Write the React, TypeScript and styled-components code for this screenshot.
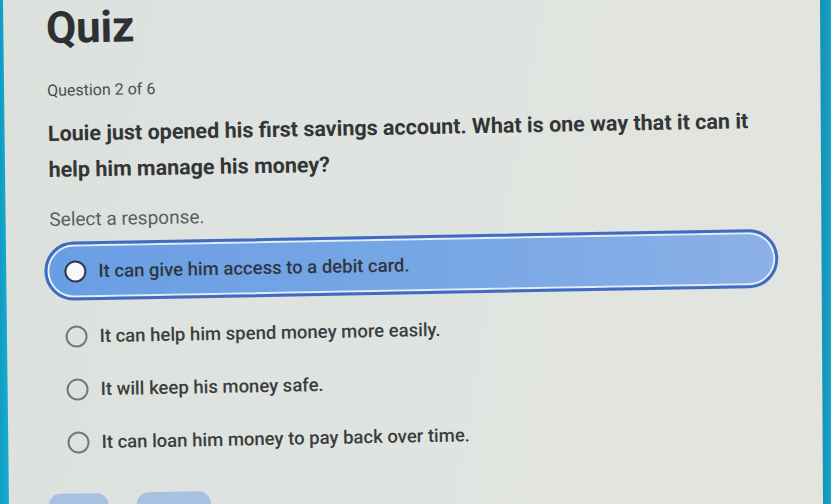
import * as React from 'react';
import styled, { createGlobalStyle } from 'styled-components';

const GlobalStyle = createGlobalStyle`
  html, body {
    margin: 0;
    padding: 0;
    height: 100%;
    overflow: hidden;
    background: #dfe3df;
  }
  #root {
    height: 100%;
  }
`;

interface Choice {
  id: string;
  label: string;
}

const choices: Choice[] = [
  { id: 'a', label: 'It can give him access to a debit card.' },
  { id: 'b', label: 'It can help him spend money more easily.' },
  { id: 'c', label: 'It will keep his money safe.' },
  { id: 'd', label: 'It can loan him money to pay back over time.' },
];

export default function App() {
  const [picked, setPicked] = React.useState('a');

  return (
    <>
      <GlobalStyle />
      <Screen>
        <LeftBezel />
        <Content>
          <Sheet>
            <Title>Quiz</Title>
            <Progress>Question 2 of 6</Progress>
            <Prompt>
              Louie just opened his first savings account. What is one way that it can it help him manage his money?
            </Prompt>
            <Hint>Select a response.</Hint>
            <ChoiceList>
              {choices.map((c) => (
                <ChoiceRow
                  key={c.id}
                  $selected={picked === c.id}
                  onClick={() => setPicked(c.id)}
                >
                  <Radio $selected={picked === c.id} />
                  <ChoiceLabel $selected={picked === c.id}>{c.label}</ChoiceLabel>
                </ChoiceRow>
              ))}
            </ChoiceList>
            <Actions>
              <ActionButton $width={60} />
              <ActionButton $width={74} />
            </Actions>
          </Sheet>
        </Content>
        <RightBezel />
      </Screen>
    </>
  );
}

const Screen = styled.div`
  display: flex;
  height: 100vh;
  overflow: hidden;
  background: linear-gradient(100deg, #dce1dd 0%, #e0e4e0 50%, #e2e4de 100%);
  font-family: Roboto, "Liberation Sans", sans-serif;
`;

const LeftBezel = styled.div`
  flex: 0 0 10px;
  background: linear-gradient(90deg, #0f9cc4, #1cb0d2);
  clip-path: polygon(0 0, 3px 0, 9px 100%, 0 100%);
`;

const RightBezel = styled.div`
  flex: 0 0 11px;
  background: linear-gradient(90deg, #1590b6, #1aa3c8);
  clip-path: polygon(0 0, 100% 0, 100% 100%, 3px 100%);
`;

const Content = styled.main`
  flex: 1;
  min-width: 0;
  overflow: hidden;
`;

/* the whole sheet sits a touch tilted on the screen */
const Sheet = styled.div`
  display: flex;
  flex-direction: column;
  align-items: flex-start;
  padding-left: 40px;
  transform: rotate(-1.05deg);
  transform-origin: 40px 250px;
`;

const Title = styled.h1`
  margin: 6px 0 0;
  font-size: 44px;
  line-height: 44px;
  font-weight: 700;
  color: #2e3133;
  letter-spacing: -0.2px;
`;

const Progress = styled.div`
  margin-top: 32px;
  font-size: 16px;
  line-height: 18px;
  color: #4b4e51;
`;

const Prompt = styled.p`
  margin: 16px 0 0;
  max-width: 730px;
  font-size: 21.5px;
  line-height: 36px;
  font-weight: 700;
  color: #333537;
`;

const Hint = styled.div`
  margin-top: 21px;
  font-size: 19px;
  line-height: 22px;
  color: #5b5e61;
`;

const ChoiceList = styled.ul`
  list-style: none;
  margin: 11px 0 0 -6px;
  padding: 0;
  display: flex;
  flex-direction: column;
  width: 734px;
`;

const ChoiceRow = styled.li<{ $selected: boolean }>`
  display: flex;
  align-items: center;
  gap: 12px;
  box-sizing: border-box;
  height: ${(p) => (p.$selected ? 59 : 53)}px;
  margin-bottom: ${(p) => (p.$selected ? 9.5 : 0)}px;
  padding-left: 17px;
  border: 3px solid ${(p) => (p.$selected ? '#3f6cc0' : 'transparent')};
  border-radius: 32px;
  background: ${(p) =>
    p.$selected ? 'linear-gradient(90deg, #6a9ee3 0%, #77a7e6 55%, #8cb0e6 100%)' : 'transparent'};
  box-shadow: ${(p) => (p.$selected ? 'inset 0 0 0 2px #e4edf9' : 'none')};
  cursor: pointer;
`;

const Radio = styled.span<{ $selected: boolean }>`
  flex: 0 0 auto;
  box-sizing: border-box;
  width: 22px;
  height: 22px;
  border-radius: 50%;
  border: ${(p) => (p.$selected ? '2.5px solid #2c3850' : '2px solid #74777a')};
  background: ${(p) => (p.$selected ? '#f7f8fa' : 'transparent')};
`;

const ChoiceLabel = styled.span<{ $selected: boolean }>`
  font-size: 18.5px;
  font-weight: 500;
  color: ${(p) => (p.$selected ? '#2f3642' : '#3b3e40')};
`;

const Actions = styled.div`
  display: flex;
  gap: 28px;
  margin: 24px 0 0 -6px;
`;

const ActionButton = styled.div<{ $width: number }>`
  width: ${(p) => p.$width}px;
  height: 40px;
  border-radius: 12px;
  background: #a9c1e0;
`;
